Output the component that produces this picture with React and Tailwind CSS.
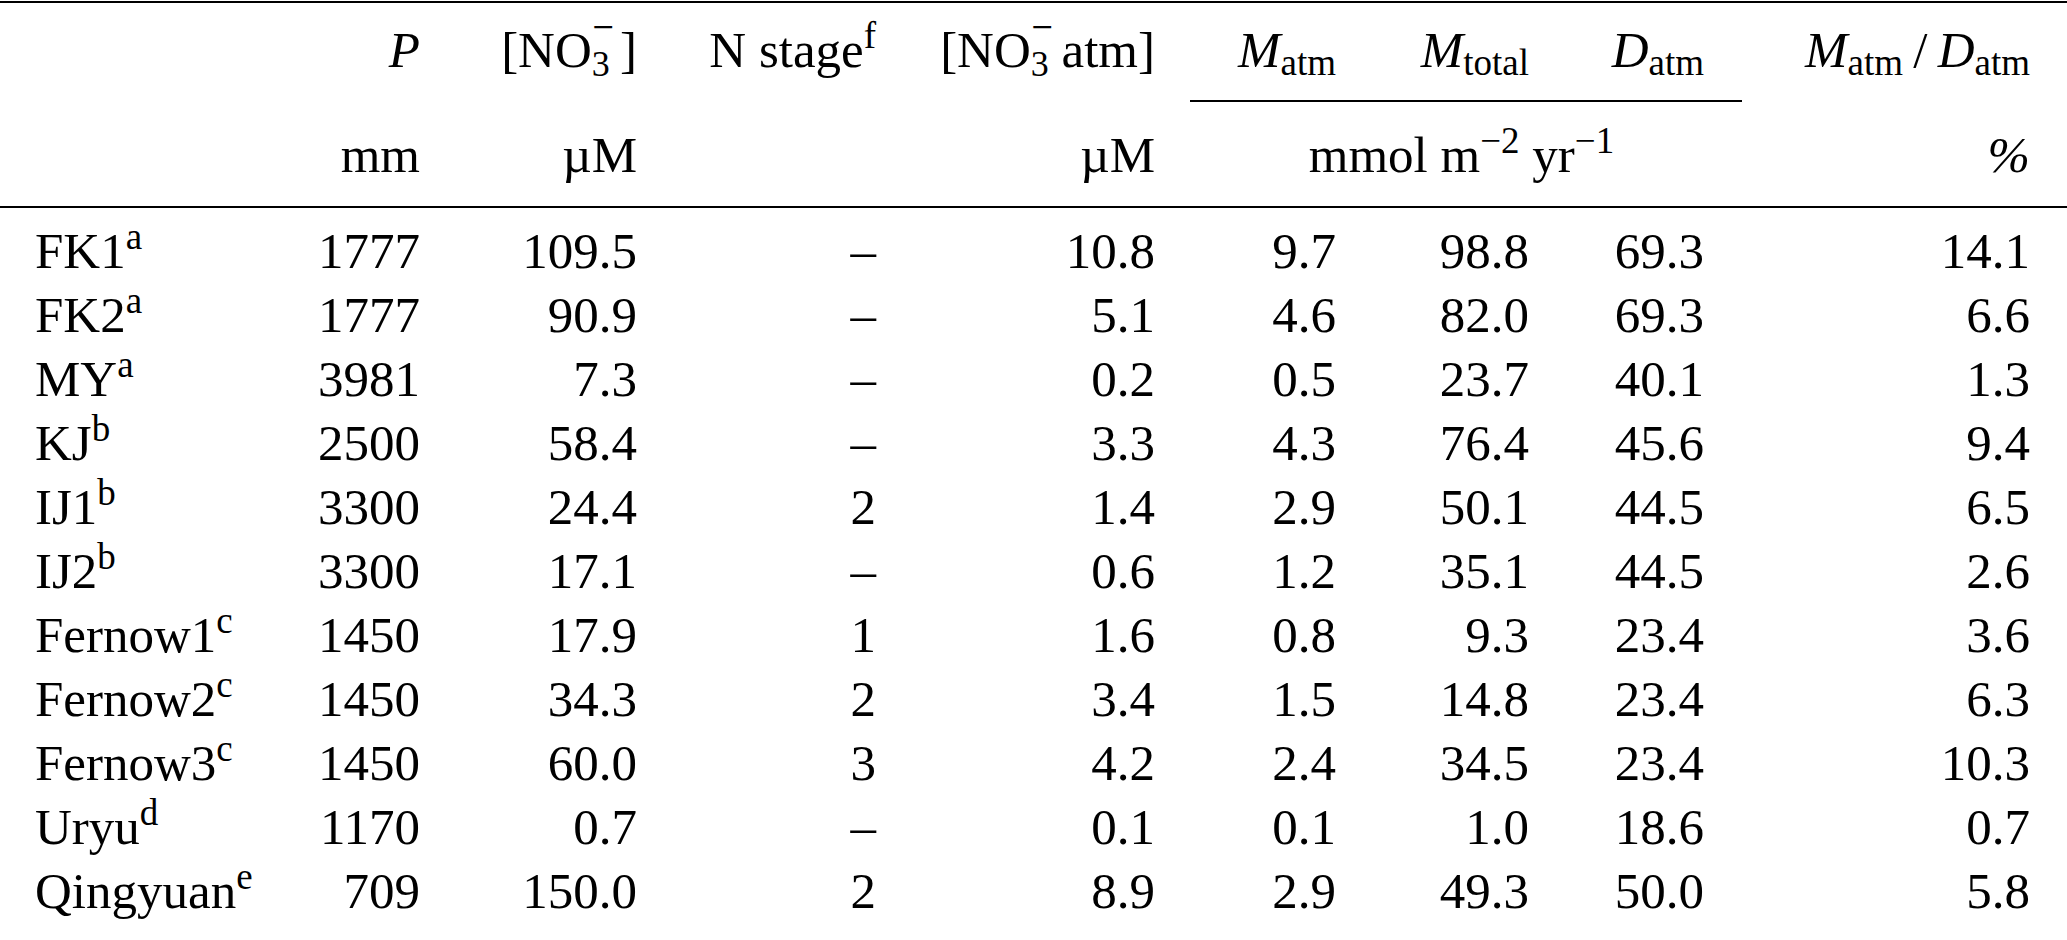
import React from "react";

// 表格欄位寬度（右對齊欄位的右緣）
const cols =
  "grid grid-cols-[260px_160px_217px_239px_279px_181px_193px_175px_326px]";

const rows = [
  ["FK1", "a", "1777", "109.5", "–", "10.8", "9.7", "98.8", "69.3", "14.1"],
  ["FK2", "a", "1777", "90.9", "–", "5.1", "4.6", "82.0", "69.3", "6.6"],
  ["MY", "a", "3981", "7.3", "–", "0.2", "0.5", "23.7", "40.1", "1.3"],
  ["KJ", "b", "2500", "58.4", "–", "3.3", "4.3", "76.4", "45.6", "9.4"],
  ["IJ1", "b", "3300", "24.4", "2", "1.4", "2.9", "50.1", "44.5", "6.5"],
  ["IJ2", "b", "3300", "17.1", "–", "0.6", "1.2", "35.1", "44.5", "2.6"],
  ["Fernow1", "c", "1450", "17.9", "1", "1.6", "0.8", "9.3", "23.4", "3.6"],
  ["Fernow2", "c", "1450", "34.3", "2", "3.4", "1.5", "14.8", "23.4", "6.3"],
  ["Fernow3", "c", "1450", "60.0", "3", "4.2", "2.4", "34.5", "23.4", "10.3"],
  ["Uryu", "d", "1170", "0.7", "–", "0.1", "0.1", "1.0", "18.6", "0.7"],
  ["Qingyuan", "e", "709", "150.0", "2", "8.9", "2.9", "49.3", "50.0", "5.8"],
];

const Sup = ({ children }) => (
  <sup className="-top-[19px] text-[37px]">{children}</sup>
);

const Sub = ({ children }) => (
  <span className="relative top-[8px] text-[37px] not-italic">{children}</span>
);

// NO3 的上下標疊在一起：3 往下，負號在上
const NO3 = ({ children }) => (
  <>
    [NO
    <span className="relative inline-block text-[36px] leading-none">
      <span className="relative top-[9px]">3</span>
      <span className="absolute -top-[26px] left-0 inline-block origin-left scale-x-[1.2] text-[32px] font-bold leading-none">
        −
      </span>
    </span>
    {children}]
  </>
);

const Var = ({ name, sub }) => (
  <>
    <i>{name}</i>
    <Sub>{sub}</Sub>
  </>
);

const App = () => {
  return (
    <div className="w-[2067px] min-h-[940px] bg-white text-black font-['Liberation_Serif','Times_New_Roman',serif] text-[51px] leading-[64px]">
      <div className="mt-px h-[2px] bg-black" />

      {/* 表頭第一列 */}
      <div className={`${cols} mt-[15px] text-right`}>
        <div />
        <div>
          <i>P</i>
        </div>
        <div>
          <NO3>&thinsp;</NO3>
        </div>
        <div>
          N stage<Sup>f</Sup>
        </div>
        <div>
          <NO3> atm</NO3>
        </div>
        <div>
          <Var name="M" sub="atm" />
        </div>
        <div>
          <Var name="M" sub="total" />
        </div>
        <div>
          <Var name="D" sub="atm" />
        </div>
        <div>
          <Var name="M" sub="atm" />
          &thinsp;/&thinsp;
          <Var name="D" sub="atm" />
        </div>
      </div>

      <div className={`${cols} mt-[13px]`}>
        <div className="col-span-3 col-start-6 ml-[35px] -mr-[38px] h-[2px] bg-black" />
      </div>

      {/* 表頭第二列：單位 */}
      <div className={`${cols} mt-[21px] text-right`}>
        <div />
        <div>mm</div>
        <div>µM</div>
        <div />
        <div>µM</div>
        <div className="col-span-3 pl-[64px] text-center">
          mmol m<Sup>−2</Sup> yr<Sup>−1</Sup>
        </div>
        <div>
          <i>%</i>
        </div>
      </div>

      <div className="mt-[19px] h-[2px] bg-black" />

      <div className="pt-[11px]">
        {rows.map(([name, note, ...vals], i) => (
          <div key={i} className={`${cols} h-[64px] text-right`}>
            <div className="pl-[35px] text-left">
              {name}
              <Sup>{note}</Sup>
            </div>
            {vals.map((v, j) => (
              <div key={j}>{v}</div>
            ))}
          </div>
        ))}
      </div>

      <div className="mt-[17px] h-[3px] bg-black" />
    </div>
  );
};

export default App;
